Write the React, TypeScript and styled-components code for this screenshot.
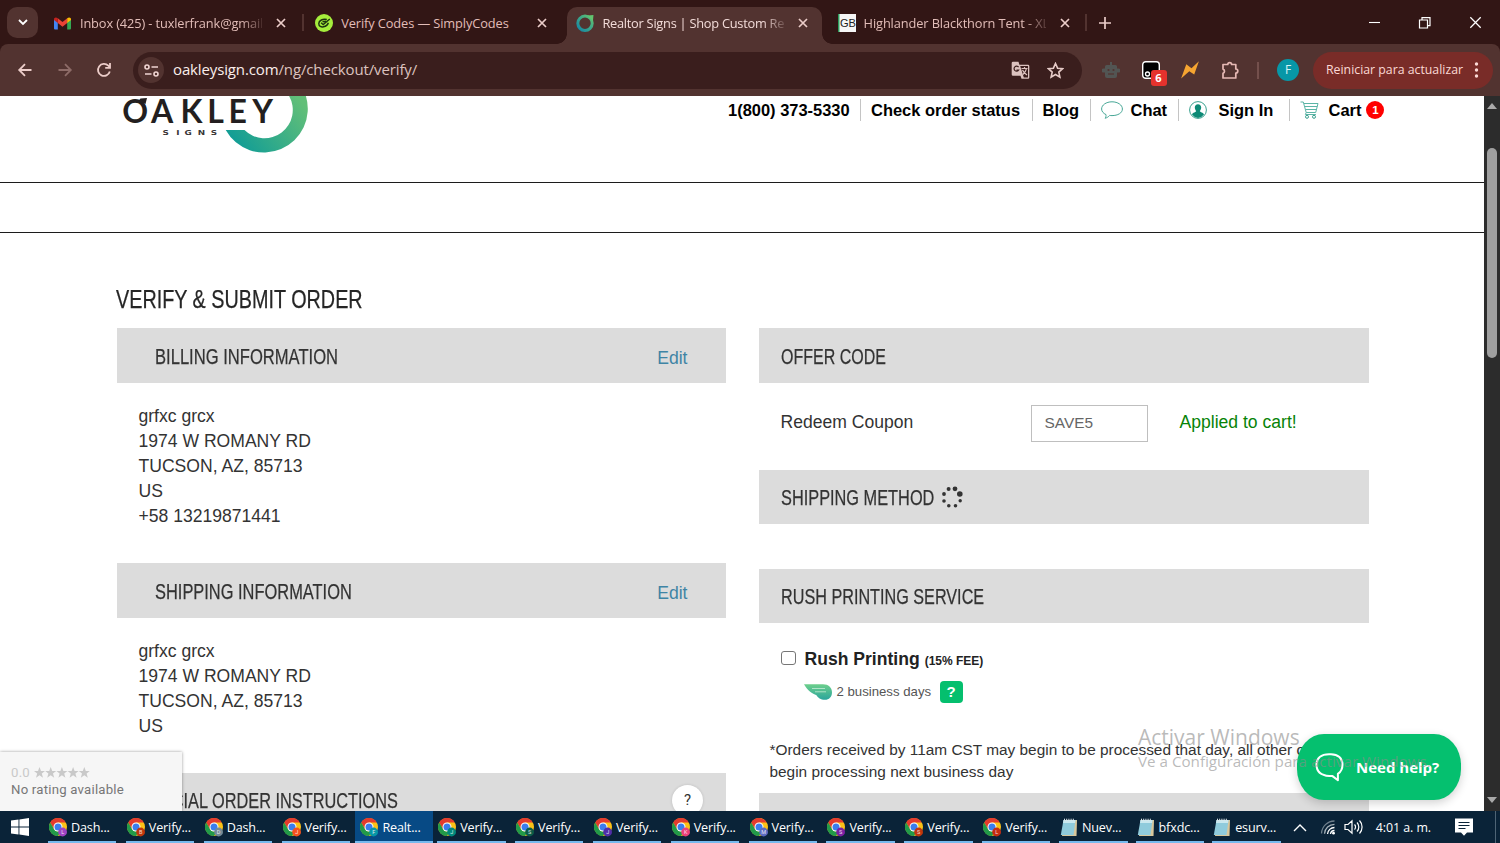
import React from "react";
import styled, { createGlobalStyle } from "styled-components";

const GlobalStyle = createGlobalStyle`
  *, *::before, *::after { box-sizing: border-box; }
  html, body { margin: 0; padding: 0; overflow: hidden; background: #fff; }
  svg { display: block; flex: none; }
`;

const sans = `"Liberation Sans", Arial, sans-serif`;
const ui = `"Open Sans", "Noto Sans", sans-serif`;

const Desktop = styled.div`
  width: 1500px;
  height: 843px;
  display: flex;
  flex-direction: column;
  position: relative;
  overflow: hidden;
  background: #321615;
  font-family: ${sans};
`;

/* ---------- browser tab strip ---------- */

const TabStrip = styled.div`
  height: 44px;
  flex: none;
  background: #321615;
  display: flex;
  padding: 7px 0 0 7px;
  font-family: ${ui};
  color: #e7c6c2;
`;

const TabSearch = styled.div`
  width: 31px;
  height: 31px;
  border-radius: 10px;
  background: #523330;
  display: grid;
  place-items: center;
  margin-right: 7px;
`;

const Tabs = styled.div`
  display: flex;
  gap: 6.2px;
`;

const TabBox = styled.div<{ $active?: boolean; $divider?: boolean }>`
  position: relative;
  width: 255px;
  height: 37px;
  padding: 0 10px 5px 9px;
  display: flex;
  align-items: center;
  border-radius: 10px 10px 0 0;
  background: ${(p) => (p.$active ? "#523330" : "transparent")};
  color: ${(p) => (p.$active ? "#f3dcd9" : "#e2bdb8")};
  ${(p) =>
    p.$active &&
    `
    &::before, &::after {
      content: "";
      position: absolute;
      bottom: 0;
      width: 10px;
      height: 10px;
    }
    &::before { left: -10px; background: radial-gradient(circle at 0 0, transparent 9.5px, #523330 10px); }
    &::after { right: -10px; background: radial-gradient(circle at 100% 0, transparent 9.5px, #523330 10px); }
  `}
  ${(p) =>
    p.$divider &&
    `
    &::after {
      content: "";
      position: absolute;
      right: -3.5px;
      top: 7px;
      width: 2px;
      height: 17px;
      background: #523330;
    }
  `}
`;

const Favicon = styled.span`
  width: 18px;
  display: grid;
  place-items: center;
`;

const TabTitle = styled.span<{ $fade?: boolean; $spacing?: number }>`
  width: 183px;
  margin-left: 8px;
  overflow: hidden;
  white-space: nowrap;
  font-size: 12.8px;
  line-height: 20px;
  letter-spacing: ${(p) => p.$spacing ?? 0}px;
  ${(p) => p.$fade && `-webkit-mask-image: linear-gradient(90deg, #000 88%, rgba(0, 0, 0, 0.2) 100%);`}
`;

const TabClose = styled.span`
  width: 18px;
  margin-left: 10px;
  display: grid;
  place-items: center;
`;

const NewTab = styled.span`
  width: 20px;
  height: 31px;
  margin-left: 11.5px;
  display: grid;
  place-items: center;
`;

const WindowControls = styled.div`
  margin-left: auto;
  height: 31px;
  display: flex;
  align-items: center;
  gap: 37px;
  padding-right: 18px;
`;

/* ---------- browser toolbar ---------- */

const Toolbar = styled.div`
  height: 52px;
  flex: none;
  background: #523330;
  border-radius: 8px 8px 0 0;
  display: flex;
  align-items: center;
  padding: 0 7px 0 15px;
  font-family: ${ui};
  color: #e7c6c2;
`;

const NavButtons = styled.div`
  display: flex;
  gap: 19.5px;
  width: 118px;
`;

const AddressBar = styled.div`
  width: 949px;
  height: 37px;
  border-radius: 19px;
  background: #3a1e1d;
  display: flex;
  align-items: center;
  padding: 0 18px 0 5px;
`;

const SiteInfo = styled.span`
  width: 26px;
  height: 26px;
  border-radius: 50%;
  background: #523330;
  display: grid;
  place-items: center;
`;

const Url = styled.span`
  flex: 1;
  margin-left: 9px;
  padding-bottom: 2px;
  font-size: 15px;
  letter-spacing: -0.13px;
  color: #dcc2bf;
  b { font-weight: 400; color: #fbeeec; }
`;

const AddressActions = styled.span`
  display: flex;
  align-items: center;
  gap: 17px;
`;

const Extensions = styled.div`
  display: flex;
  align-items: center;
  gap: 21.500px;
  margin-left: 20px;
`;

const ExtensionWithBadge = styled.span`
  position: relative;
`;

const ExtensionBadge = styled.span`
  position: absolute;
  left: 9px;
  top: 9px;
  width: 16px;
  height: 16px;
  border-radius: 3px;
  background: #e5322d;
  color: #fff;
  font: 700 11px/16px ${ui};
  text-align: center;
`;

const ToolbarDivider = styled.span`
  width: 2px;
  height: 17px;
  margin-left: 17.5px;
  background: #74504c;
`;

const Avatar = styled.span`
  width: 22px;
  height: 22px;
  margin-left: 18px;
  border-radius: 50%;
  background: #0797a7;
  color: #d9f3f5;
  font-size: 12px;
  line-height: 22px;
  text-align: center;
`;

const UpdatePill = styled.span`
  width: 180px;
  height: 37px;
  margin-left: auto;
  border-radius: 19px;
  background: #792c28;
  color: #fbd9d5;
  display: flex;
  align-items: center;
  justify-content: space-between;
  padding: 0 14px 1px 13px;
  font-size: 12.3px;
  white-space: nowrap;
`;

/* ---------- web page ---------- */

const Viewport = styled.div`
  height: 715px;
  flex: none;
  display: flex;
  background: #fff;
`;

const Page = styled.main`
  width: 1484px;
  height: 715px;
  overflow: hidden;
  color: #333;
`;

const Header = styled.header`
  height: 87px;
  border-bottom: 1px solid #1c1c1c;
  display: flex;
  padding-left: 117px;
`;

const Navigation = styled.nav`
  height: 28px;
  margin-left: 418px;
  display: flex;
  align-items: center;
  color: #000;
  font-size: 16.47px;
  font-weight: 700;
  white-space: nowrap;
`;

const NavItem = styled.a<{ $w: number; $first?: boolean }>`
  width: ${(p) => p.$w}px;
  height: 22px;
  padding-left: ${(p) => (p.$first ? 0 : 10)}px;
  border-left: ${(p) => (p.$first ? "none" : "1px solid #c4c4c4")};
  display: flex;
  align-items: center;
`;

const NavLabel = styled.span<{ $gap: number }>`
  margin-left: ${(p) => p.$gap}px;
`;

const CartCount = styled.span`
  width: 18px;
  height: 18px;
  margin-left: 5px;
  border-radius: 50%;
  background: #f00;
  color: #fff;
  font-size: 11.5px;
  line-height: 18px;
  text-align: center;
`;

const MenuBar = styled.div`
  height: 50px;
  border-bottom: 1px solid #1c1c1c;
`;

const Content = styled.div`
  padding: 0 115px 0 117px;
`;

const Condensed = styled.span<{ $scale: number }>`
  display: inline-block;
  white-space: nowrap;
  transform: scaleX(${(p) => p.$scale});
  transform-origin: 0 50%;
  -webkit-text-stroke: 0.25px currentColor;
`;

const PageTitle = styled.h1`
  height: 95px;
  margin: 0 0 0 -1px;
  padding-top: 50px;
  font-size: 26.6px;
  line-height: 32px;
  font-weight: 400;
  color: #262626;
`;

const Columns = styled.div`
  display: grid;
  grid-template-columns: 609px 610px;
  gap: 33px;
`;

const PanelHead = styled.h2<{ $indent: number }>`
  position: relative;
  height: 54.5px;
  margin: 0;
  padding: 3px 38.5px 0 ${(p) => p.$indent}px;
  background: #dcdcdc;
  display: flex;
  align-items: center;
  font-size: 22.6px;
  font-weight: 400;
`;

const EditLink = styled.a`
  margin-left: auto;
  padding-top: 3px;
  font-size: 17.57px;
  color: #3f84a5;
`;

const HeadSpinner = styled.span`
  position: absolute;
  left: 182px;
  top: 16px;
`;

const HintBubble = styled.span`
  position: absolute;
  left: 555px;
  top: 12px;
  width: 31px;
  height: 31px;
  border-radius: 50%;
  background: #fff;
  box-shadow: 0 0 3px rgba(0, 0, 0, 0.15);
  font: 400 15px/31px Roboto, sans-serif;
  text-align: center;
  color: #333;
`;

const PanelBody = styled.div<{ $h: number }>`
  height: ${(p) => p.$h}px;
  padding: 21px 21.5px 0;
  font-size: 17.57px;
  line-height: 25.1px;
`;

const CouponRow = styled.div`
  display: grid;
  grid-template-columns: 250px 149px auto;
`;

const CouponLabel = styled.span`
  padding-top: 6px;
`;

const CouponInput = styled.input`
  width: 117px;
  height: 37px;
  margin-top: 1px;
  padding: 0 13px;
  border: 1px solid #bfbfbf;
  font: 400 15.4px ${sans};
  color: #666;
  outline: none;
`;

const CouponStatus = styled(CouponLabel)`
  color: #078307;
`;

const RushOption = styled.label`
  display: flex;
  align-items: center;
  height: 24px;
  margin-top: 4px;
  font-weight: 700;
  color: #222;
  small { font-size: 12px; padding-top: 3px; margin-left: 5px; }
`;

const Checkbox = styled.span`
  width: 15px;
  height: 14px;
  margin: 0 9px 4px 0;
  border: 1px solid #767676;
  border-radius: 3px;
  background: #fff;
`;

const RushDetail = styled.div`
  display: flex;
  align-items: center;
  height: 22px;
  margin: 9px 0 0 23px;
  font-size: 13.2px;
  color: #555;
`;

const DetailText = styled.span`
  width: 94px;
  margin: 0 9px 0 5px;
  white-space: nowrap;
`;

const HelpTag = styled.span`
  width: 23px;
  height: 22px;
  border-radius: 4px;
  background: #05bf6e;
  color: #fff;
  font-weight: 700;
  font-size: 15px;
  line-height: 22px;
  text-align: center;
`;

const RushNote = styled.p`
  margin: 36px -20px 0 -11px;
  font-size: 15.4px;
  line-height: 22px;
  white-space: nowrap;
`;

const Scrollbar = styled.div`
  width: 16px;
  background: #2c2c2c;
  display: flex;
  flex-direction: column;
  align-items: center;
  padding: 7px 0 8px;
`;

const Thumb = styled.div`
  width: 10px;
  height: 210px;
  margin-top: 39px;
  border-radius: 5px;
  background: #9f9f9f;
`;

const ArrowMark = styled.div<{ $down?: boolean }>`
  border: 5px solid transparent;
  border-${(p) => (p.$down ? "top" : "bottom")}: 6px solid #a9a9a9;
  border-${(p) => (p.$down ? "bottom" : "top")}: 0;
  margin-top: ${(p) => (p.$down ? "auto" : 0)};
`;

/* ---------- floating layers ---------- */

const RatingCard = styled.div`
  position: absolute;
  left: 0;
  top: 752px;
  width: 182px;
  height: 59px;
  padding: 12px 0 0 11px;
  background: #f6f6f6;
  box-shadow: 0 0 3px rgba(0, 0, 0, 0.4);
  font: 400 13.2px/17px Roboto, sans-serif;
  letter-spacing: 0.22px;
  color: #777;
`;

const RatingRow = styled.div`
  display: flex;
  align-items: center;
  gap: 4px;
  color: #c9c9c9;
`;

const HelpButton = styled.div`
  position: absolute;
  left: 1297px;
  top: 734px;
  width: 164px;
  height: 66px;
  border-radius: 27px / 31px;
  background: #05c06f;
  box-shadow: 0 3px 10px rgba(0, 0, 0, 0.18);
  display: flex;
  align-items: center;
  gap: 12px;
  padding: 0 0 1px 18px;
  color: #fff;
  font: 700 15px ${ui};
  white-space: nowrap;
`;

const Watermark = styled.div`
  position: absolute;
  left: 1138px;
  top: 723px;
  font-family: ${ui};
  color: rgba(140, 140, 140, 0.6);
  white-space: nowrap;
`;

const WatermarkTitle = styled.div`
  font-size: 21px;
  line-height: 28px;
`;

const WatermarkText = styled.div`
  font-size: 15.2px;
  line-height: 21px;
`;

/* ---------- taskbar ---------- */

const Taskbar = styled.footer`
  height: 32px;
  flex: none;
  background: #0a2338;
  display: flex;
  font-family: ${ui};
  color: #fff;
  position: relative;
`;

const StartButton = styled.div`
  width: 44px;
  padding-left: 11px;
  display: flex;
  align-items: center;
`;

const TaskItem = styled.div<{ $active?: boolean; $narrow?: boolean }>`
  position: relative;
  width: ${(p) => (p.$narrow ? 76.6 : 77.85)}px;
  padding-left: 5px;
  display: flex;
  align-items: center;
  gap: 4px;
  font-size: 12.6px;
  letter-spacing: -0.15px;
  white-space: nowrap;
  background: ${(p) => (p.$active ? "#074a85" : "transparent")};
  &::after {
    content: "";
    position: absolute;
    left: ${(p) => (p.$active ? 0 : 4)}px;
    right: ${(p) => (p.$active ? 0 : p.$narrow ? 4 : 5.5)}px;
    bottom: 0;
    height: 2px;
    background: #76b9ed;
  }
`;

const NotepadItems = styled.div`
  display: flex;
  margin-left: -1px;
`;

const Tray = styled.div`
  display: flex;
  align-items: center;
  gap: 8px;
  margin-left: 8px;
`;

const Chevron = styled.span`
  margin-right: 5px;
`;

const Clock = styled.span`
  width: 56px;
  margin: 0 15px 0 4px;
  font-size: 12.4px;
  letter-spacing: -0.05px;
  white-space: nowrap;
`;

const ShowDesktop = styled.span`
  margin-left: auto;
  width: 5px;
  border-left: 1px solid #4e6475;
`;

/* ---------- icons ---------- */

const CloseIcon = ({ size = 10, color = "#eccdc9", weight = 1.7 }) => (
  <svg width={size} height={size} viewBox="0 0 10 10">
    <path d="M1 1l8 8M9 1L1 9" stroke={color} strokeWidth={weight} />
  </svg>
);

const GmailIcon = () => (
  <svg width="17" height="13" viewBox="0 0 17 13">
    <path d="M0 2.2V11.6a1 1 0 0 0 1 1h2.8V5z" fill="#4285f4" />
    <path d="M17 2.2V11.6a1 1 0 0 1-1 1h-2.8V5z" fill="#34a853" />
    <path d="M3.8 1.2L8.500 4.900l4.700-3.700V6L8.500 9.700 3.800 6z" fill="#ea4335" />
    <path d="M0 2.200C0 .4 2 -.3 3.800 1.200V6L0 3z" fill="#c5221f" />
    <path d="M17 2.200c0-1.800-2-2.500-3.800-1V6L17 3z" fill="#fbbc04" />
  </svg>
);

const SimplyIcon = () => (
  <svg width="18" height="18" viewBox="0 0 18 18">
    <circle cx="9" cy="9" r="9" fill="#a5ee3c" />
    <path d="M11.800 5.600C8 4.600 3.800 6.400 3.800 9.400s2.500 3.800 4.700 3.400 4.200-1.800 4.800-4" fill="none" stroke="#1d3310" strokeWidth="1.500" />
    <path d="M6 8.800l2.200 1.700L14.800 5M7.500 7.800l3.500-.6" fill="none" stroke="#1d3310" strokeWidth="1.400" />
  </svg>
);

const RingIcon = () => (
  <svg width="18" height="18" viewBox="0 0 18 18">
    <defs>
      <linearGradient id="ring" x1="0" y1="1" x2="1" y2="0">
        <stop offset="0" stopColor="#1286a6" />
        <stop offset="1" stopColor="#62c46f" />
      </linearGradient>
    </defs>
    <circle cx="9" cy="9.300" r="7.200" fill="none" stroke="url(#ring)" strokeWidth="3" />
    <path d="M11.500 1.500l6-.5-.6 6z" fill="#62c46f" />
  </svg>
);

const GbIcon = () => (
  <svg width="18" height="18" viewBox="0 0 18 18">
    <rect width="18" height="18" fill="#f6f6f6" />
    <rect width="1.500" height="18" fill="#2b9c5b" />
    <text x="2" y="13" fontFamily="Liberation Sans" fontSize="11.500" textLength="16" lengthAdjust="spacingAndGlyphs" fill="#222">GB</text>
  </svg>
);

const TranslateIcon = () => (
  <svg width="19" height="19" viewBox="0 0 19 19">
    <path d="M2 .7h5.500l.9 3H17a1.300 1.300 0 0 1 1.300 1.300v11.500a1.300 1.300 0 0 1-1.300 1.300h-6.500l-1-3H2A1.300 1.300 0 0 1 .7 13.500V2A1.300 1.300 0 0 1 2 .7z" fill="#dcc2bf" />
    <path d="M9.200 5l3.600 11.500H17V5z" fill="#3a1e1d" />
    <path d="M10.500 7.500h6M13.500 6v1.500M15.500 7.500c-.5 2.500-2 4.500-3.500 6M11.500 9c.8 2 2.500 3.500 4.500 5" stroke="#dcc2bf" strokeWidth="1.200" fill="none" />
    <path d="M7.600 6.200A2.500 2.500 0 1 0 7.700 9H5.500" stroke="#3a1e1d" strokeWidth="1.200" fill="none" />
  </svg>
);

const StarOutline = () => (
  <svg width="17" height="17" viewBox="0 0 17 17">
    <path d="M8.500 1.500l2.100 4.700 5 .5-3.800 3.400 1.100 5-4.400-2.600-4.400 2.600 1.100-5L1.400 6.700l5-.5z" fill="none" stroke="#e6cbc8" strokeWidth="1.600" />
  </svg>
);

const RobotIcon = () => (
  <svg width="18" height="18" viewBox="0 0 18 18">
    <path d="M8 1h2v3h3.500A1.500 1.500 0 0 1 15 5.500V7.500h1.500a1.500 1.500 0 0 1 0 4H15V15a2 2 0 0 1-2 2H5a2 2 0 0 1-2-2v-3.500H1.500a1.500 1.500 0 0 1 0-4H3v-2A1.500 1.500 0 0 1 4.500 4H8z" fill="#525553" />
    <circle cx="6.500" cy="9" r="1.100" fill="#523330" />
    <circle cx="11.500" cy="9" r="1.100" fill="#523330" />
    <path d="M6 13h6" stroke="#523330" strokeWidth="1.200" />
  </svg>
);

const BlackBoxIcon = () => (
  <svg width="18" height="18" viewBox="0 0 18 18">
    <rect x=".7" y=".7" width="16.600" height="16.600" rx="3" fill="#000" stroke="#fff" strokeWidth="1.400" />
    <circle cx="5.500" cy="13" r="2" fill="none" stroke="#fff" strokeWidth="1.300" />
  </svg>
);

const BoltIcon = () => (
  <svg width="18" height="18" viewBox="0 0 18 18">
    <path d="M5.300 3.200L10.500 7.200 17.900.3 13.200 13.400 8.300 10.200.1 17.400z" fill="#f6a531" />
  </svg>
);

const PuzzleIcon = () => (
  <svg width="19" height="19" viewBox="0 0 19 19">
    <path d="M2 3.500h4.800a1.900 1.900 0 0 1 3.800 0h4.200V8a1.900 1.900 0 0 1 0 4v5H2v-4.600a2.300 2.300 0 0 0 0-4.300z" fill="none" stroke="#e6b9b4" strokeWidth="1.700" strokeLinejoin="round" />
  </svg>
);

const OakleyLogo = () => (
  <svg width="193" height="60" viewBox="117 96 193 60">
    <defs>
      <linearGradient id="logo" x1="235" y1="150" x2="300" y2="100" gradientUnits="userSpaceOnUse">
        <stop offset="0" stopColor="#0d9b97" />
        <stop offset="1" stopColor="#62bf78" />
      </linearGradient>
    </defs>
    <path d="M289.100 96H305.900A43.800 43.800 0 0 1 225.700 130H244.500A28.300 28.300 0 0 0 289.100 96z" fill="url(#logo)" />
    <text x="122.300 151 180.500 207.300 228.500 252.300" y="122.500" fontFamily="Lato" fontWeight="700" fontSize="32" fill="#231f20">OAKLEY</text>
    <path d="M138 101.500l2.500-3 6.500-.5-1.500 6z" fill="#231f20" />
    <g transform="scale(1.300 1)">
      <text x="125.100 135.600 141.900 152.100 162.100" y="135" fontFamily="DejaVu Sans" fontWeight="700" fontSize="6.800" fill="#3a3637">SIGNS</text>
    </g>
  </svg>
);

const ChatOutline = () => (
  <svg width="22" height="18" viewBox="0 0 22 18">
    <path d="M4 17.200c.9-1 1.200-2.300 1-3.600C2.400 12.400.6 10.400.6 8 .6 4 5.200.8 11 .8S21.400 4 21.400 8 16.800 14.600 11 14.600c-.8 0-1.600 0-2.300-.2C7.400 15.900 5.800 16.900 4 17.200z" fill="none" stroke="#45a695" strokeWidth="1" />
  </svg>
);

const PersonIcon = () => (
  <svg width="18" height="18" viewBox="0 0 18 18">
    <circle cx="9" cy="9" r="8.400" fill="none" stroke="#38a08e" strokeWidth="1" />
    <path d="M9 3.200c2 0 3.200 1.400 3.200 3.300 0 1.600-.8 2.800-1.400 3.500.3 1.500 3.500 1.300 4.200 3.600A8 8 0 0 1 9 17a8 8 0 0 1-6-3.400c.7-2.300 3.900-2.100 4.200-3.600-.6-.7-1.400-1.900-1.400-3.500C5.800 4.600 7 3.200 9 3.200z" fill="#0d8a76" />
  </svg>
);

const CartIcon = () => (
  <svg width="19" height="18" viewBox="0 0 19 18">
    <path d="M.5 1h2.800l2.900 10.500h9.500L18 2.500H4M4.800 5.500h12.400M5.600 8.500h10.800M6.200 11.500l-.8 2h10.500" fill="none" stroke="#5cb5a6" strokeWidth="1" />
    <circle cx="7" cy="15.800" r="1.500" fill="none" stroke="#38a08e" />
    <circle cx="14" cy="15.800" r="1.500" fill="none" stroke="#38a08e" />
  </svg>
);

const SPINNER_DOTS = [
  [14, 2.8, 2.4], [18.8, 8, 2.8], [19.2, 14.7, 1.7], [14.5, 19.8, 1.8],
  [7.800, 19.8, 1.8], [3, 15, 1.8], [3, 8, 1.9], [7.600, 3, 2],
];

const Spinner = () => (
  <svg width="23" height="23" viewBox="0 0 23 23">
    {SPINNER_DOTS.map(([cx, cy, r]) => (
      <circle key={`${cx}-${cy}`} cx={cx} cy={cy} r={r} fill="#333" />
    ))}
  </svg>
);

const WingIcon = () => (
  <svg width="28" height="16" viewBox="0 0 28 16">
    <defs>
      <linearGradient id="wing" x1="0" y1="0" x2="0" y2="1">
        <stop offset="0" stopColor="#6dcf8c" />
        <stop offset="1" stopColor="#2ba59c" />
      </linearGradient>
    </defs>
    <path d="M0 .3h19c5.500 0 9 3.300 9 7.900s-3 7.600-7 7.600c-4.500 0-7-2-8.500-4.600C8.500 10 3 6 0 .3z" fill="url(#wing)" />
    <path d="M8 4.500h13M11 7.800h11" stroke="#c5ecd6" strokeWidth=".8" />
  </svg>
);

const HelpBubble = () => (
  <svg width="29" height="30" viewBox="0 0 29 30">
    <path d="M14 2.200h2c7 0 11.500 4.200 11.500 10.500 0 4.600-2 7.300-4.600 9.200v6.400l-5.400-4.200h-3.200C6 23.300 1.500 19 1.500 12.700S6 2.200 14 2.200z" fill="none" stroke="#fff" strokeWidth="2" strokeLinejoin="round" />
  </svg>
);

const RatingStars = () => (
  <svg width="56" height="11" viewBox="0 0 56 11">
    {[0, 1, 2, 3, 4].map((i) => (
      <path key={i} transform={`translate(${i * 11.2} 0)`} d="M5.500 0l1.500 3.900 4 .1-3.200 2.600 1.200 4.100-3.500-2.400L2 10.700l1.200-4.100L0 4l4-.1z" fill="#c9c9c9" />
    ))}
  </svg>
);

const WindowsLogo = () => (
  <svg width="18" height="18" viewBox="0 0 18 18" fill="#fff">
    <path d="M0 2.600L7.500 1.500v7H0zM8.400 1.400L18 0v8.500H8.400zM0 9.400h7.500v7.100L0 15.400zM8.400 9.400H18V18l-9.600-1.400z" />
  </svg>
);

const ChromeIcon = ({ badge, letter }: { badge: string; letter: string }) => (
  <svg width="18" height="19" viewBox="0 0 18 19">
    <circle cx="9" cy="9" r="9" fill="#fbc116" />
    <path d="M1.200 4.500A9 9 0 0 1 16.800 4.500H9L5.100 11.300z" fill="#e33b2e" />
    <path d="M1.200 4.500L5.100 11.250A4.500 4.500 0 0 0 12.900 11.250L9 18A9 9 0 0 1 1.200 4.500z" fill="#229a49" />
    <circle cx="9" cy="9" r="4.500" fill="#fff" />
    <circle cx="9" cy="9" r="3.500" fill="#3b7ded" />
    <circle cx="13.600" cy="14" r="4.400" fill={badge} />
    <text x="13.600" y="16.100" textAnchor="middle" fontFamily="Roboto" fontSize="5.500" fill="#fff" fillOpacity=".85">{letter}</text>
  </svg>
);

const NotepadIcon = () => (
  <svg width="18" height="19" viewBox="0 0 18 19">
    <path d="M4 2h13l-.5 16L2 18z" fill="#d8c79c" />
    <path d="M3.500 2h12L13.500 17H.8z" fill="#8fcbdc" />
    <path d="M3.500 2h12l-.5 3H3z" fill="#c9e8ef" />
    <path d="M4.500 3V.7M6.700 3V.7M8.900 3V.7M11.100 3V.7M13.300 3V.7" stroke="#dfe7ea" strokeWidth="1" />
  </svg>
);

/* ---------- data ---------- */

const TABS = [
  { title: "Inbox (425) - tuxlerfrank@gmail.com", icon: <GmailIcon />, fade: true, divider: true, spacing: -0.12 },
  { title: "Verify Codes — SimplyCodes", icon: <SimplyIcon />, spacing: -0.1 },
  { title: "Realtor Signs | Shop Custom Real Estate", icon: <RingIcon />, fade: true, active: true, spacing: -0.25 },
  { title: "Highlander Blackthorn Tent - XL", icon: <GbIcon />, fade: true, divider: true, spacing: -0.1 },
];

const TASKS = [
  { label: "Dash...", badge: "#a142c4", letter: "L" },
  { label: "Verify...", badge: "#bf360c", letter: "B" },
  { label: "Dash...", badge: "#738a96", letter: "D" },
  { label: "Verify...", badge: "#f4511e", letter: "J" },
  { label: "Realt...", badge: "#0797a7", letter: "F", active: true },
  { label: "Verify...", badge: "#00897b", letter: "J" },
  { label: "Verify...", badge: "#0b5c47", letter: "S" },
  { label: "Verify...", badge: "#512da8", letter: "J" },
  { label: "Verify...", badge: "#ec407a", letter: "K" },
  { label: "Verify...", badge: "#5c6bc0", letter: "M" },
  { label: "Verify...", badge: "#7b1fa2", letter: "S" },
  { label: "Verify...", badge: "#bf360c", letter: "S" },
  { label: "Verify...", badge: "#c62b12", letter: "L" },
];

const NOTES = ["Nuev...", "bfxdc...", "esurv..."];

const ADDRESS = ["grfxc grcx", "1974 W ROMANY RD", "TUCSON, AZ, 85713", "US"];

const Address = ({ lines }: { lines: string[] }) => (
  <>
    {lines.map((line) => (
      <div key={line}>{line}</div>
    ))}
  </>
);

export default function App() {
  return (
    <Desktop>
      <GlobalStyle />
      <TabStrip>
        <TabSearch>
          <svg width="10" height="7" viewBox="0 0 10 7">
            <path d="M1 1l4 4 4-4" fill="none" stroke="#fff" strokeWidth="1.800" />
          </svg>
        </TabSearch>
        <Tabs>
          {TABS.map((tab) => (
            <TabBox key={tab.title} $active={tab.active} $divider={tab.divider}>
              <Favicon>{tab.icon}</Favicon>
              <TabTitle $fade={tab.fade} $spacing={tab.spacing}>{tab.title}</TabTitle>
              <TabClose><CloseIcon /></TabClose>
            </TabBox>
          ))}
        </Tabs>
        <NewTab>
          <svg width="12" height="12" viewBox="0 0 12 12">
            <path d="M6 0v12M0 6h12" stroke="#eccdc9" strokeWidth="1.700" />
          </svg>
        </NewTab>
        <WindowControls>
          <svg width="14" height="14" viewBox="0 0 14 14">
            <path d="M2 6.500h11" stroke="#fff" strokeWidth="1.100" />
          </svg>
          <svg width="14" height="14" viewBox="0 0 14 14">
            <path d="M1.500 4h8v8h-8zM4 4V1.700h8v8H9.500" fill="none" stroke="#fff" strokeWidth="1.200" />
          </svg>
          <CloseIcon size={13} color="#fff" weight={0.95} />
        </WindowControls>
      </TabStrip>

      <Toolbar>
        <NavButtons>
          <svg width="20" height="20" viewBox="0 0 20 20">
            <path d="M16.500 10H4.500M10 4.200L4.200 10l5.800 5.800" fill="none" stroke="#eccdc9" strokeWidth="1.800" />
          </svg>
          <svg width="20" height="20" viewBox="0 0 20 20">
            <path d="M3.500 10h12M10 4.200l5.800 5.800-5.800 5.800" fill="none" stroke="#8d6b67" strokeWidth="1.800" />
          </svg>
          <svg width="20" height="20" viewBox="0 0 20 20">
            <path d="M15.800 11.500A6 6 0 1 1 14.300 5.700L16 7.500M16 3v4.800h-4.800" fill="none" stroke="#eccdc9" strokeWidth="1.800" />
          </svg>
        </NavButtons>
        <AddressBar>
          <SiteInfo>
            <svg width="15" height="13" viewBox="0 0 15 13">
              <g fill="none" stroke="#f0d5d2" strokeWidth="1.600">
                <circle cx="3" cy="3" r="2" />
                <path d="M7.500 3H14M1 10h6.500" />
                <circle cx="12" cy="10" r="2" />
              </g>
            </svg>
          </SiteInfo>
          <Url><b>oakleysign.com</b>/ng/checkout/verify/</Url>
          <AddressActions>
            <TranslateIcon />
            <StarOutline />
          </AddressActions>
        </AddressBar>
        <Extensions>
          <RobotIcon />
          <ExtensionWithBadge>
            <BlackBoxIcon />
            <ExtensionBadge>6</ExtensionBadge>
          </ExtensionWithBadge>
          <BoltIcon />
          <PuzzleIcon />
        </Extensions>
        <ToolbarDivider />
        <Avatar>F</Avatar>
        <UpdatePill>
          Reiniciar para actualizar
          <svg width="5" height="16" viewBox="0 0 5 16" fill="#fbd9d5">
            <circle cx="2.500" cy="2" r="1.700" />
            <circle cx="2.500" cy="8" r="1.700" />
            <circle cx="2.500" cy="14" r="1.700" />
          </svg>
        </UpdatePill>
      </Toolbar>

      <Viewport>
        <Page>
          <Header>
            <OakleyLogo />
            <Navigation>
              <NavItem $first $w={132}>1(800) 373-5330</NavItem>
              <NavItem $w={171.5}>Check order status</NavItem>
              <NavItem $w={58}>Blog</NavItem>
              <NavItem $w={88}><ChatOutline /><NavLabel $gap={8}>Chat</NavLabel></NavItem>
              <NavItem $w={111}><PersonIcon /><NavLabel $gap={12}>Sign In</NavLabel></NavItem>
              <NavItem $w={110}><CartIcon /><NavLabel $gap={10}>Cart</NavLabel><CartCount>1</CartCount></NavItem>
            </Navigation>
          </Header>
          <MenuBar />
          <Content>
            <PageTitle><Condensed $scale={0.744}>VERIFY &amp; SUBMIT ORDER</Condensed></PageTitle>
            <Columns>
              <div>
                <PanelHead $indent={37.5}>
                  <Condensed $scale={0.734}>BILLING INFORMATION</Condensed>
                  <EditLink>Edit</EditLink>
                </PanelHead>
                <PanelBody $h={180.5}>
                  <Address lines={[...ADDRESS, "+58 13219871441"]} />
                </PanelBody>
                <PanelHead $indent={37.5}>
                  <Condensed $scale={0.727}>SHIPPING INFORMATION</Condensed>
                  <EditLink>Edit</EditLink>
                </PanelHead>
                <PanelBody $h={155}>
                  <Address lines={ADDRESS} />
                </PanelBody>
                <PanelHead $indent={21.5}>
                  <Condensed $scale={0.723}>SPECIAL ORDER INSTRUCTIONS</Condensed>
                  <HintBubble>?</HintBubble>
                </PanelHead>
              </div>
              <div>
                <PanelHead $indent={21.5}><Condensed $scale={0.708}>OFFER CODE</Condensed></PanelHead>
                <PanelBody $h={87}>
                  <CouponRow>
                    <CouponLabel>Redeem Coupon</CouponLabel>
                    <CouponInput defaultValue="SAVE5" />
                    <CouponStatus>Applied to cart!</CouponStatus>
                  </CouponRow>
                </PanelBody>
                <PanelHead $indent={21.5}>
                  <Condensed $scale={0.723}>SHIPPING METHOD</Condensed>
                  <HeadSpinner><Spinner /></HeadSpinner>
                </PanelHead>
                <PanelBody $h={44.5} />
                <PanelHead $indent={21.5}><Condensed $scale={0.717}>RUSH PRINTING SERVICE</Condensed></PanelHead>
                <PanelBody $h={170}>
                  <RushOption><Checkbox />Rush Printing <small>(15% FEE)</small></RushOption>
                  <RushDetail>
                    <WingIcon />
                    <DetailText>2 business days</DetailText>
                    <HelpTag>?</HelpTag>
                  </RushDetail>
                  <RushNote>
                    *Orders received by 11am CST may begin to be processed that day, all other orders
                    <br />
                    begin processing next business day
                  </RushNote>
                </PanelBody>
                <PanelHead $indent={21.5} />
              </div>
            </Columns>
          </Content>
        </Page>
        <Scrollbar>
          <ArrowMark />
          <Thumb />
          <ArrowMark $down />
        </Scrollbar>
      </Viewport>

      <RatingCard>
        <RatingRow>0.0 <RatingStars /></RatingRow>
        No rating available
      </RatingCard>
      <HelpButton><HelpBubble /> Need help?</HelpButton>
      <Watermark>
        <WatermarkTitle>Activar Windows</WatermarkTitle>
        <WatermarkText>Ve a Configuración para activar Windows.</WatermarkText>
      </Watermark>

      <Taskbar>
        <StartButton><WindowsLogo /></StartButton>
        {TASKS.map((task, i) => (
          <TaskItem key={i} $active={task.active}>
            <ChromeIcon badge={task.badge} letter={task.letter} />
            {task.label}
          </TaskItem>
        ))}
        <NotepadItems>
          {NOTES.map((note) => (
            <TaskItem key={note} $narrow><NotepadIcon />{note}</TaskItem>
          ))}
        </NotepadItems>
        <Tray>
          <Chevron>
            <svg width="14" height="9" viewBox="0 0 14 9">
              <path d="M1 8l6-6 6 6" fill="none" stroke="#fff" strokeWidth="1.400" />
            </svg>
          </Chevron>
          <svg width="16" height="16" viewBox="0 0 16 16">
            <g fill="none" strokeWidth="1.300">
              <path d="M1.500 14.500A13 13 0 0 1 14.500 2" stroke="#70808d" />
              <path d="M4.500 14.800A10 10 0 0 1 14.500 5.300" stroke="#a5b0b8" />
              <path d="M7.500 15A7 7 0 0 1 14.500 8.500M10.500 15a4 4 0 0 1 4-3.500" stroke="#fff" />
            </g>
            <circle cx="13.500" cy="14.200" r="1.400" fill="#fff" />
          </svg>
          <svg width="20" height="16" viewBox="0 0 20 16">
            <path d="M1 5.500h3l4-3.700v12.400l-4-3.700H1zM10.500 5.500a3.500 3.500 0 0 1 0 5M13 3.500a6.500 6.500 0 0 1 0 9M15.500 1.500a9.500 9.500 0 0 1 0 13" fill="none" stroke="#fff" strokeWidth="1.200" />
          </svg>
          <Clock>4:01 a. m.</Clock>
          <svg width="18" height="18" viewBox="0 0 18 18">
            <path d="M0 .5h18v14h-6L9 17.800 6 14.500H0z" fill="#fff" />
            <path d="M3.500 4.500h11M3.500 7.500h11M3.500 10.500h7" stroke="#0a2338" strokeWidth="1.200" />
          </svg>
        </Tray>
        <ShowDesktop />
      </Taskbar>
    </Desktop>
  );
}
